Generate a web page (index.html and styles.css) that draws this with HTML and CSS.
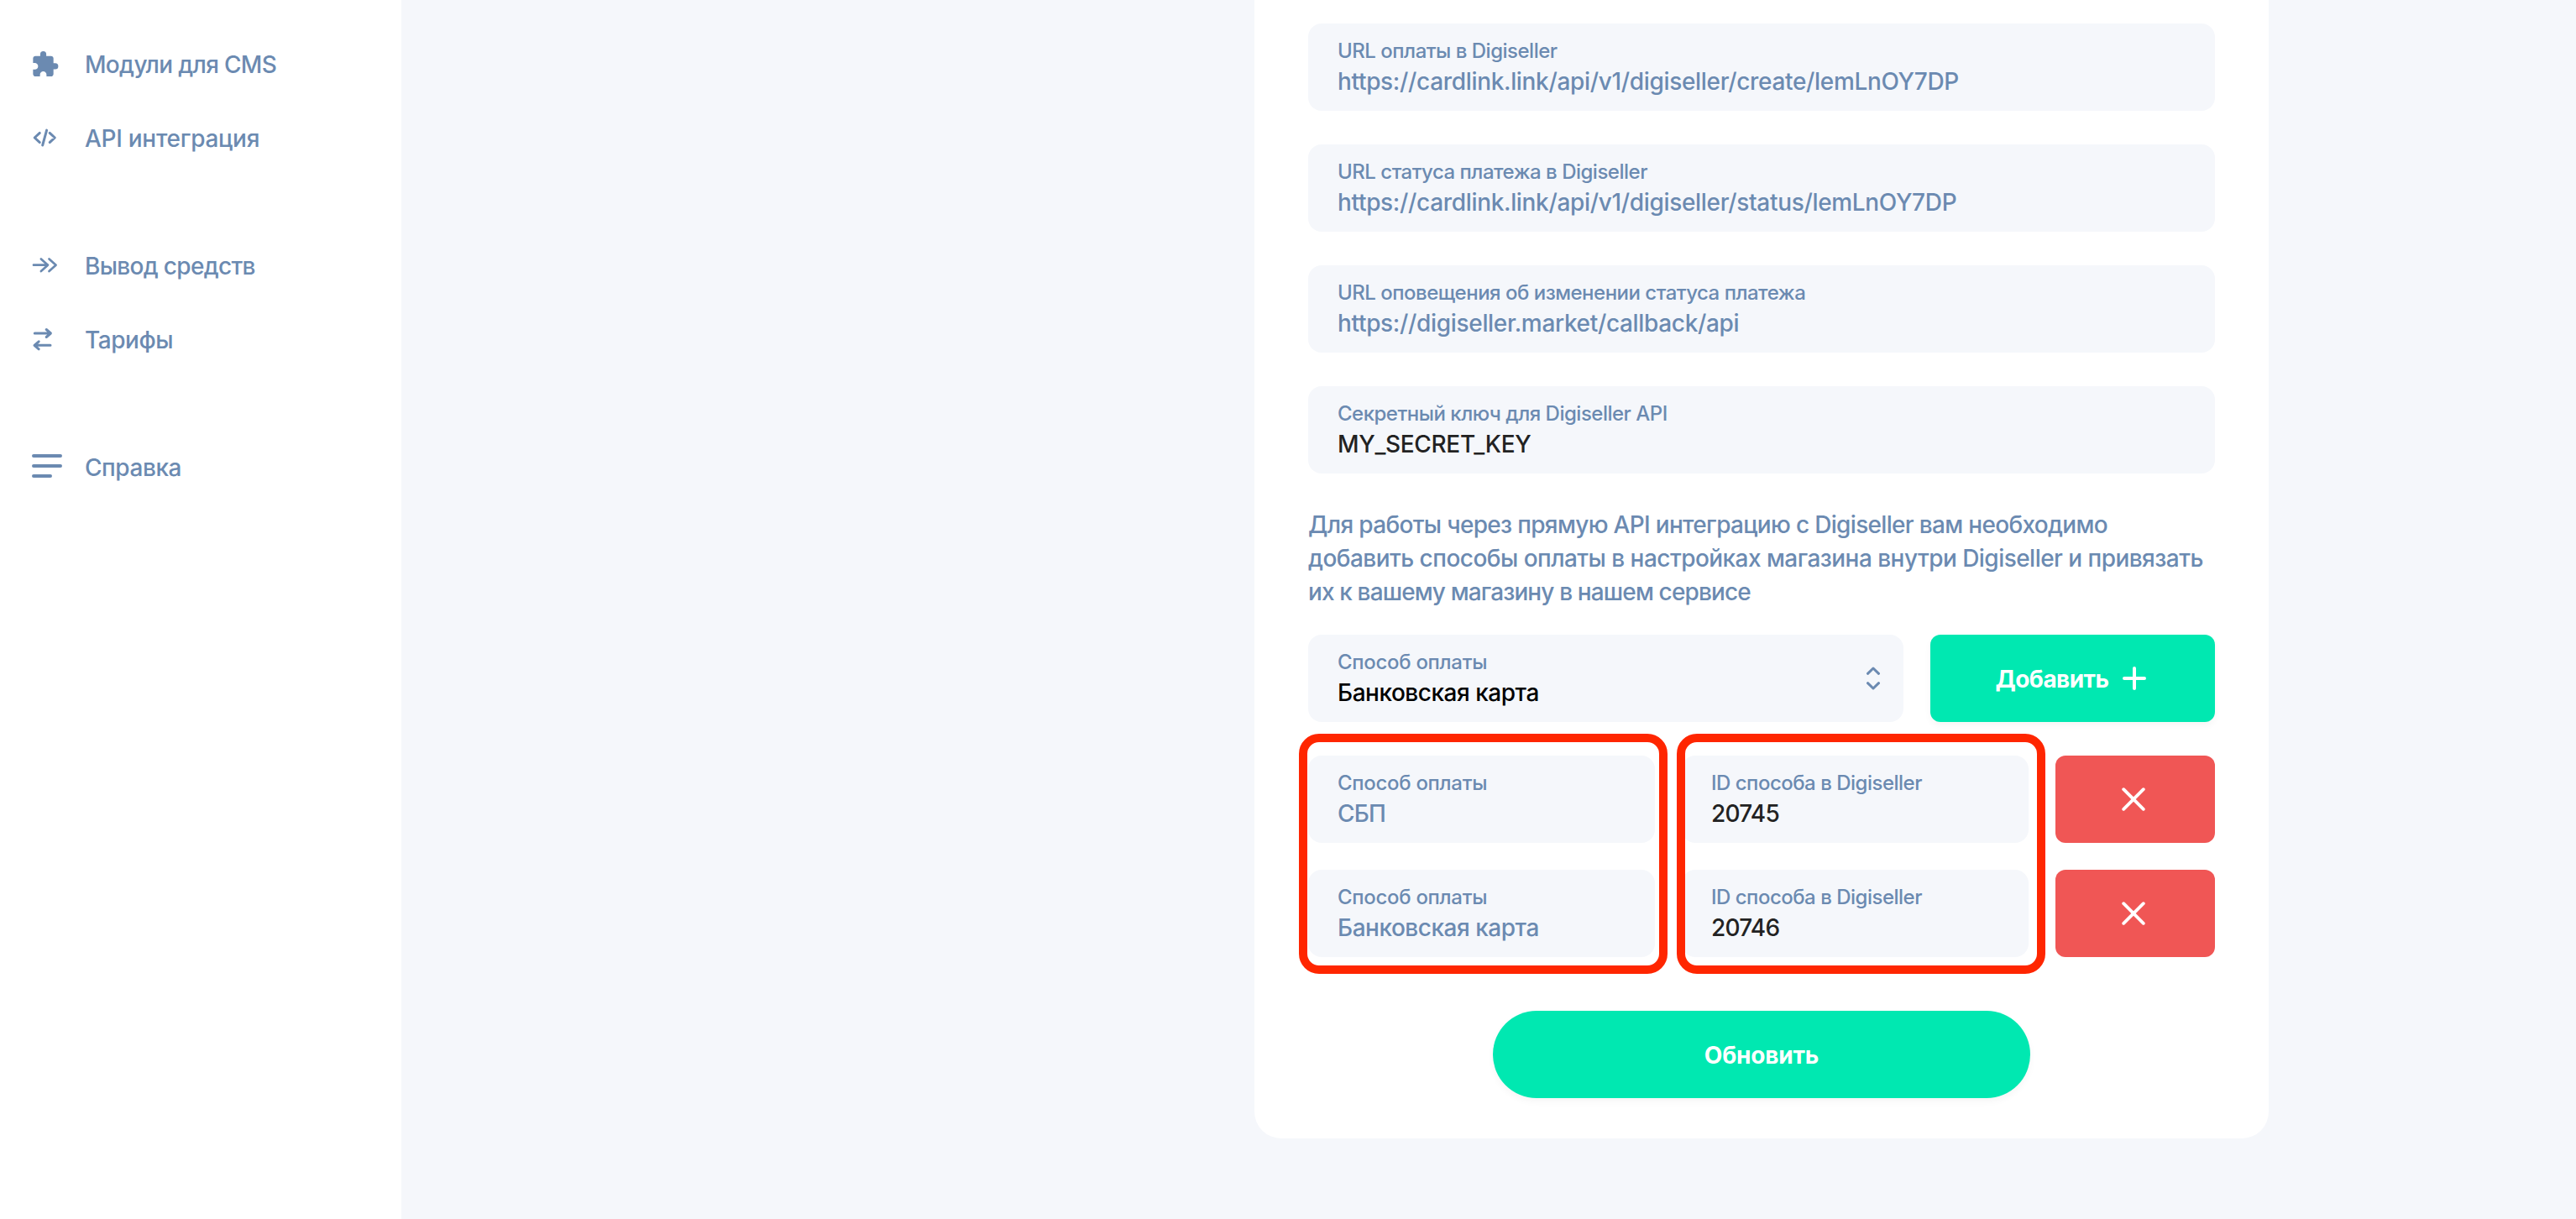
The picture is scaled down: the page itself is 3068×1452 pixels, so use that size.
FILE: index.html
```html
<!DOCTYPE html>
<html lang="ru">
<head>
    <meta charset="UTF-8">
    <meta name="viewport" content="width=device-width, initial-scale=1.0">
    <title>Digiseller</title>
    <link rel="stylesheet" href="styles.css">
</head>
<body>

<div class="layout">
  <nav class="sidebar">
    <div class="menu-group">
      <a class="menu-item">
        <svg class="menu-icon" viewBox="0 0 36 36"><path class="solid" transform="translate(-1.5 1.6) scale(1.43)" d="M20.5 11H19V7c0-1.1-.9-2-2-2h-4V3.5a2.5 2.5 0 0 0-5 0V5H4c-1.1 0-2 .9-2 2v3.8h1.5c1.49 0 2.7 1.21 2.7 2.7s-1.21 2.7-2.7 2.7H2V20c0 1.1.9 2 2 2h3.8v-1.5c0-1.49 1.21-2.7 2.7-2.7s2.7 1.21 2.7 2.7V22H17c1.1 0 2-.9 2-2v-4h1.5a2.5 2.5 0 0 0 0-5z"/></svg>
        <span class="menu-text tight">Модули для CMS</span>
      </a>
      <a class="menu-item">
        <svg class="menu-icon" viewBox="0 0 36 36"><path d="M9.3 12.4L3.2 18l6.1 5.6M17.6 9.1L12.7 27M21.2 12.4l6.1 5.6-6.1 5.6"/></svg>
        <span class="menu-text wide">API интеграция</span>
      </a>
    </div>
    <div class="menu-group">
      <a class="menu-item">
        <svg class="menu-icon thin" viewBox="0 0 36 36"><path d="M2 17.7h17M10.9 10.4l8.1 7.3-8.1 7.3M20.5 10.4l8.1 7.3-8.1 7.3"/></svg>
        <span class="menu-text tight">Вывод средств</span>
      </a>
      <a class="menu-item">
        <svg class="menu-icon" viewBox="0 0 36 36"><path d="M3.3 11H22M17.2 6.5l5.2 4.5-5.2 4.5M22 25.3H3.3M8.2 20.8L3 25.3l5.2 4.5"/></svg>
        <span class="menu-text">Тарифы</span>
      </a>
    </div>
    <div class="menu-group">
      <a class="menu-item">
        <svg class="menu-icon bold" viewBox="0 0 36 36"><path d="M2 5h32M2 17h32M2 29h20"/></svg>
        <span class="menu-text">Справка</span>
      </a>
    </div>
  </nav>

  <main class="content">
    <div class="card">
      <div class="fields">
        <div class="field">
          <div class="label">URL оплаты в Digiseller</div>
          <div class="value url">https://cardlink.link/api/v1/digiseller/create/lemLnOY7DP</div>
        </div>
        <div class="field">
          <div class="label">URL статуса платежа в Digiseller</div>
          <div class="value url">https://cardlink.link/api/v1/digiseller/status/lemLnOY7DP</div>
        </div>
        <div class="field">
          <div class="label">URL оповещения об изменении статуса платежа</div>
          <div class="value url">https://digiseller.market/callback/api</div>
        </div>
        <div class="field">
          <div class="label">Секретный ключ для Digiseller API</div>
          <div class="value url dark">MY_SECRET_KEY</div>
        </div>
      </div>

      <p class="note">
        <span class="note-first">Для работы через прямую API интеграцию с Digiseller вам необходимо</span><br>
        <span class="note-second">добавить способы оплаты в настройках магазина внутри Digiseller и привязать</span><br>
        <span class="note-third">их к вашему магазину в нашем сервисе</span>
      </p>

      <div class="add-row">
        <div class="field select">
          <div>
            <div class="label short">Способ оплаты</div>
            <div class="value black">Банковская карта</div>
          </div>
          <svg class="select-icon" viewBox="0 0 16 28"><path d="M1.5 8.3L8 2l6.5 6.3M1.5 19.7L8 26l6.5-6.3"/></svg>
        </div>
        <button class="btn btn-add">
          <span>Добавить</span>
          <svg class="plus" viewBox="0 0 28 28"><path d="M14 2v24M2 14h24"/></svg>
        </button>
      </div>

      <div class="methods">
        <div class="method">
          <div class="field">
            <div class="label short">Способ оплаты</div>
            <div class="value sbp">СБП</div>
          </div>
          <div class="field">
            <div class="label">ID способа в Digiseller</div>
            <div class="value dark number">20745</div>
          </div>
          <button class="btn-remove">
            <svg class="cross" viewBox="0 0 28 28"><path d="M2.2 2.2l23.6 23.6M25.8 2.2L2.2 25.8"/></svg>
          </button>
        </div>
        <div class="method">
          <div class="field">
            <div class="label short">Способ оплаты</div>
            <div class="value">Банковская карта</div>
          </div>
          <div class="field">
            <div class="label">ID способа в Digiseller</div>
            <div class="value dark number">20746</div>
          </div>
          <button class="btn-remove">
            <svg class="cross" viewBox="0 0 28 28"><path d="M2.2 2.2l23.6 23.6M25.8 2.2L2.2 25.8"/></svg>
          </button>
        </div>
        <div class="frame frame-method"></div>
        <div class="frame frame-id"></div>
      </div>

      <button class="btn btn-update"><span>Обновить</span></button>
    </div>
  </main>
</div>

</body>
</html>
```
FILE: styles.css
```css
* {
  box-sizing: border-box;
}

body {
  margin: 0;
  font-family: Inter, "Noto Sans", sans-serif;
  font-size: 28px;
  font-weight: 500;
  color: #6b8ab1;
  background-color: #f5f7fb;
}

button {
  border: none;
  padding: 0;
  font-family: inherit;
  font-size: 28px;
  color: #fff;
}

svg {
  fill: none;
  stroke: currentColor;
  stroke-width: 3;
  stroke-linecap: round;
  stroke-linejoin: round;
  flex-shrink: 0;
}

.layout {
  display: flex;
  height: 1452px;
  overflow: hidden;
}

/* sidebar */

.sidebar {
  width: 478px;
  flex-shrink: 0;
  padding: 32px 38px;
  background-color: #fff;
  display: flex;
  flex-direction: column;
  gap: 64px;
}

.menu-item {
  display: flex;
  align-items: center;
  gap: 27px;
  height: 88px;
}

.menu-icon {
  width: 36px;
  height: 36px;
}

.menu-icon.thin {
  stroke-width: 2.7;
}

.menu-icon.bold {
  stroke-width: 4;
}

.solid {
  fill: currentColor;
  stroke: none;
}

.menu-text {
  line-height: 38px;
  padding-top: 1px;
  letter-spacing: -0.45px;
}

.menu-text.tight {
  letter-spacing: -0.68px;
}

.menu-text.wide {
  letter-spacing: -0.28px;
}

/* card */

.content {
  flex: 1;
  padding-left: 1016px;
}

.card {
  width: 1208px;
  height: 1356px;
  padding: 28px 64px 48px;
  background-color: #fff;
  border-radius: 0 0 32px 32px;
}

.fields {
  display: flex;
  flex-direction: column;
  gap: 40px;
}

.field {
  height: 104px;
  padding: 15px 28px 0 35px;
  background-color: #f5f7fb;
  border-radius: 16px;
  white-space: nowrap;
}

.label {
  font-size: 24px;
  font-weight: 450;
  line-height: 36px;
  letter-spacing: -0.5px;
}

.label.short {
  letter-spacing: -0.3px;
}

.value {
  line-height: 36px;
  letter-spacing: -0.47px;
}

.value.url {
  letter-spacing: -0.33px;
}

.value.sbp,
.value.number {
  letter-spacing: -0.77px;
}

.dark {
  color: #222;
}

.black {
  color: #000;
}

.note {
  margin: 41px 0 31px;
  line-height: 40px;
  white-space: nowrap;
}

.note-first {
  letter-spacing: -0.68px;
}

.note-second {
  letter-spacing: -0.54px;
}

.note-third {
  letter-spacing: -0.87px;
}

.add-row {
  display: flex;
  gap: 32px;
}

.select {
  flex: 1;
  display: flex;
  justify-content: space-between;
}

.select-icon {
  width: 16px;
  height: 28px;
  margin-top: 23px;
}

.btn {
  height: 104px;
  display: flex;
  align-items: center;
  justify-content: center;
  font-weight: 700;
  background-color: #00e8b1;
  box-shadow: 0 4px 8px rgba(0, 0, 0, 0.04);
}

.btn span {
  padding-top: 2px;
}

.btn-add {
  width: 339px;
  gap: 16px;
  padding-right: 5px;
  border-radius: 12px;
  letter-spacing: -0.55px;
}

.plus {
  width: 28px;
  height: 28px;
  stroke-width: 4;
}

/* added payment methods */

.methods {
  position: relative;
  display: flex;
  flex-direction: column;
  gap: 32px;
  margin-top: 40px;
}

.method {
  display: grid;
  grid-template-columns: 413px 413px 190px;
  column-gap: 32px;
}

.btn-remove {
  display: flex;
  align-items: center;
  justify-content: center;
  background-color: #f05655;
  border-radius: 12px;
}

.cross {
  width: 28px;
  height: 28px;
  margin-right: 4px;
  stroke-width: 3.8;
}

/* red outlines over the columns */
.frame {
  position: absolute;
  top: -26px;
  height: 286px;
  width: 439px;
  border: 10px solid #ff2600;
  border-radius: 24px;
}

.frame-method {
  left: -11px;
}

.frame-id {
  left: 439px;
}

.btn-update {
  width: 640px;
  margin: 64px auto 0;
  border-radius: 52px;
  letter-spacing: -0.2px;
}
```
